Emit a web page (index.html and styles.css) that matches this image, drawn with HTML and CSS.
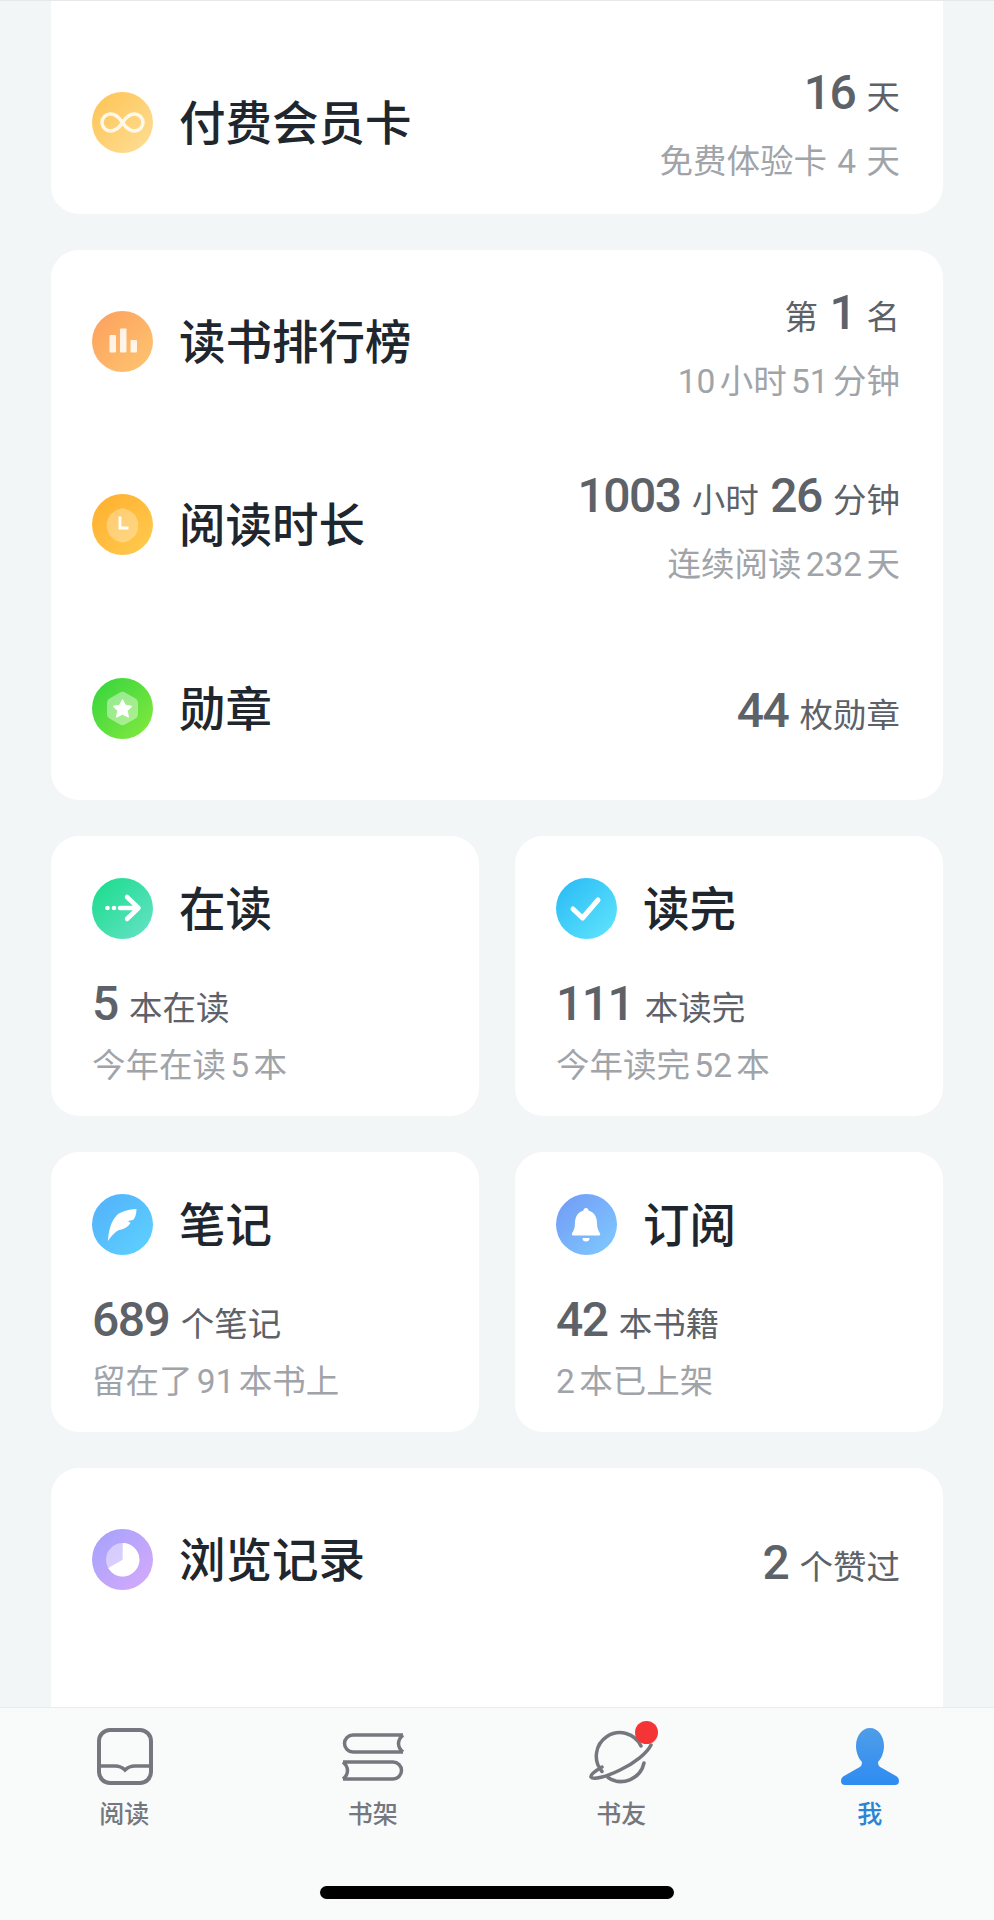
FILE: index.html
```html
<!DOCTYPE html>
<html lang="zh-CN">
  <head>
    <meta charset="UTF-8" />
    <title>我</title>
    <link rel="stylesheet" href="styles.css">
  </head>
  <body>
    <main class="content">
      <!-- Membership -->
      <section class="card card-first">
        <div class="row">
          <svg class="icon" viewBox="0 0 61 61">
            <defs><linearGradient id="g1" x1="0" y1="0" x2="1" y2="1"><stop offset="0" stop-color="#fdc352"/><stop offset="1" stop-color="#ffdf98"/></linearGradient></defs>
            <circle cx="30.5" cy="30.5" r="30.5" fill="url(#g1)"/>
            <path d="M30.500 30.500C27 25 23 22 18.500 22a8.500 8.500 0 0 0 0 17C23 39 27 36 30.500 30.500C34 25 38 22 42.500 22a8.500 8.500 0 0 1 0 17C38 39 34 36 30.500 30.500z" fill="none" stroke="#fff" stroke-opacity=".85" stroke-width="3.500"/>
          </svg>
          <h2 class="title">付费会员卡</h2>
          <div class="stat">
            <div class="stat-main"><b>16</b> 天</div>
            <div class="stat-sub stat-sub-wide">免费体验卡 4 天</div>
          </div>
        </div>
      </section>

      <!-- Ranking, time, medals -->
      <section class="card">
        <div class="row">
          <svg class="icon" viewBox="0 0 61 61">
            <defs><linearGradient id="g2" x1="0" y1="0" x2="1" y2="1"><stop offset="0" stop-color="#fd9f5e"/><stop offset="1" stop-color="#fdc670"/></linearGradient></defs>
            <circle cx="30.500" cy="30.500" r="30.500" fill="url(#g2)"/>
            <g fill="#fff" fill-opacity=".85">
              <rect x="17.500" y="24" width="6.500" height="17.500" rx="1"/>
              <rect x="28" y="17.500" width="6.500" height="24" rx="1"/>
              <rect x="38.500" y="29" width="6.500" height="12.500" rx="1"/>
            </g>
          </svg>
          <h2 class="title">读书排行榜</h2>
          <div class="stat">
            <div class="stat-main">第 <b>1</b> 名</div>
            <div class="stat-sub">10 小时 51 分钟</div>
          </div>
        </div>
        <div class="row">
          <svg class="icon" viewBox="0 0 61 61">
            <defs><linearGradient id="g3" x1="0" y1="0" x2="1" y2="1"><stop offset="0" stop-color="#ffae2e"/><stop offset="1" stop-color="#ffcc50"/></linearGradient></defs>
            <circle cx="30.500" cy="30.500" r="30.500" fill="url(#g3)"/>
            <path d="M30.500 14l7 2.400 5.700 4.700 3 6.800v7l-3 6.800-5.700 4.700-7 2.400-7-2.400-5.700-4.700-3-6.800v-7l3-6.800 5.700-4.700z" fill="#fff" fill-opacity=".3"/>
            <path d="M28 22.500V34h8.500" fill="none" stroke="#fff" stroke-width="2.800"/>
          </svg>
          <h2 class="title">阅读时长</h2>
          <div class="stat">
            <div class="stat-main"><b>1003</b> 小时 <b>26</b> 分钟</div>
            <div class="stat-sub">连续阅读 232 天</div>
          </div>
        </div>
        <div class="row">
          <svg class="icon" viewBox="0 0 61 61">
            <defs><linearGradient id="g4" x1="0" y1="0" x2="1" y2="1"><stop offset="0" stop-color="#33d43f"/><stop offset="1" stop-color="#86ea3e"/></linearGradient></defs>
            <circle cx="30.500" cy="30.500" r="30.500" fill="url(#g4)"/>
            <path d="M28 14.500a5 5 0 0 1 5 0l10.500 6a5 5 0 0 1 2.500 4.300v11.400a5 5 0 0 1-2.500 4.300l-10.500 6a5 5 0 0 1-5 0l-10.500-6a5 5 0 0 1-2.500-4.300V24.800a5 5 0 0 1 2.500-4.300z" fill="#fff" fill-opacity=".42"/>
            <path d="M30.500 21.500l3 5.800 6.400 1-4.600 4.500 1.100 6.400-5.900-3-5.900 3 1.100-6.400-4.600-4.500 6.400-1z" fill="#fff" stroke="#fff" stroke-width="1" stroke-linejoin="round"/>
          </svg>
          <h2 class="title">勋章</h2>
          <div class="stat stat-single">
            <div class="stat-main"><b>44</b> 枚勋章</div>
          </div>
        </div>
      </section>

      <!-- Shelf stats -->
      <div class="grid">
        <section class="card tile">
          <div class="tile-head">
            <svg class="icon" viewBox="0 0 61 61">
              <defs><linearGradient id="g5" x1="0" y1="0" x2="1" y2="1"><stop offset="0" stop-color="#17dc8a"/><stop offset="1" stop-color="#68e2c8"/></linearGradient></defs>
              <circle cx="30.500" cy="30.500" r="30.500" fill="url(#g5)"/>
              <circle cx="15.500" cy="30" r="2.300" fill="#fff"/>
              <circle cx="22" cy="30" r="2.300" fill="#fff"/>
              <path d="M28 30h18M35 19L46.500 30 35 41" fill="none" stroke="#fff" stroke-width="4.500" stroke-linecap="round" stroke-linejoin="round"/>
            </svg>
            <h2 class="title">在读</h2>
          </div>
          <div class="stat-main"><b>5</b> 本在读</div>
          <div class="stat-sub">今年在读 5 本</div>
        </section>
        <section class="card tile">
          <div class="tile-head">
            <svg class="icon" viewBox="0 0 61 61">
              <defs><linearGradient id="g6" x1="0" y1="0" x2="1" y2="1"><stop offset="0" stop-color="#27b9f5"/><stop offset="1" stop-color="#62e6fd"/></linearGradient></defs>
              <circle cx="30.500" cy="30.500" r="30.500" fill="url(#g6)"/>
              <path d="M17 31l9.500 9L42 22" fill="none" stroke="#fff" stroke-width="5" stroke-linecap="round" stroke-linejoin="round"/>
            </svg>
            <h2 class="title">读完</h2>
          </div>
          <div class="stat-main"><b>111</b> 本读完</div>
          <div class="stat-sub">今年读完 52 本</div>
        </section>
        <section class="card tile">
          <div class="tile-head">
            <svg class="icon" viewBox="0 0 61 61">
              <defs><linearGradient id="g7" x1="0" y1="0" x2="1" y2="1"><stop offset="0" stop-color="#52b0fb"/><stop offset="1" stop-color="#5ed2ff"/></linearGradient></defs>
              <circle cx="30.500" cy="30.500" r="30.500" fill="url(#g7)"/>
              <path d="M16 47C16.500 37 19 27 25 21C30 17 37 15.500 44.500 15C44.500 20 43 24 41 26L36 27L38.500 29C36 33 32 35.500 27 36C23 38 19 42 16 47z" fill="#fff"/>
            </svg>
            <h2 class="title">笔记</h2>
          </div>
          <div class="stat-main"><b>689</b> 个笔记</div>
          <div class="stat-sub">留在了 91 本书上</div>
        </section>
        <section class="card tile">
          <div class="tile-head">
            <svg class="icon" viewBox="0 0 61 61">
              <defs><linearGradient id="g8" x1="0" y1="0" x2="1" y2="1"><stop offset="0" stop-color="#7299f5"/><stop offset="1" stop-color="#7fcbff"/></linearGradient></defs>
              <circle cx="30.500" cy="30.500" r="30.500" fill="url(#g8)"/>
              <path d="M30 14c1.500 0 2.500 1 2.500 2.500C38 18 41 23 41 29c0 5 1.500 8 3 10.500c.5 1 0 2-1 2H17c-1 0-1.500-1-1-2c1.500-2.500 3-5.500 3-10.500c0-6 3-11 8.500-12.500C27.500 15 28.500 14 30 14z" fill="#fff"/>
              <path d="M26.500 44h7a3.500 3.500 0 0 1-7 0z" fill="#fff"/>
            </svg>
            <h2 class="title">订阅</h2>
          </div>
          <div class="stat-main"><b>42</b> 本书籍</div>
          <div class="stat-sub">2 本已上架</div>
        </section>
      </div>

      <!-- History -->
      <section class="card card-last">
        <div class="row">
          <svg class="icon" viewBox="0 0 61 61">
            <defs><linearGradient id="g9" x1="0" y1="0" x2="1" y2="1"><stop offset="0" stop-color="#a3a2fb"/><stop offset="1" stop-color="#d7aafb"/></linearGradient></defs>
            <circle cx="30.500" cy="30.500" r="30.500" fill="url(#g9)"/>
            <circle cx="30.700" cy="30.700" r="16.700" fill="#fff" fill-opacity=".45"/>
            <path d="M30.700 30.700V14A16.700 16.700 0 1 1 16.200 39z" fill="#fff"/>
          </svg>
          <h2 class="title">浏览记录</h2>
          <div class="stat stat-single">
            <div class="stat-main"><b>2</b> 个赞过</div>
          </div>
        </div>
      </section>
    </main>

    <!-- Tab bar -->
    <nav class="tabbar">
      <div class="tabs">
        <div class="tab">
          <svg class="tab-icon tab-icon-book" viewBox="0 0 56 57">
            <rect x="2" y="2" width="52" height="53" rx="11" fill="none" stroke="#74787e" stroke-width="4"/>
            <path d="M2 38h16c4 0 7 1 10 4c3-3 6-4 10-4h16" fill="none" stroke="#74787e" stroke-width="3.500"/>
          </svg>
          <span class="tab-label">阅读</span>
        </div>
        <div class="tab">
          <svg class="tab-icon" viewBox="0 -5 62 57">
            <path d="M61 2H11a8.500 8.500 0 0 0 0 17H61M61 2c-3 2.500-4.500 5-4.500 8.500S58 16.500 61 19M1 29h50a8.500 8.500 0 0 1 0 17H1M1 29c3 2.500 4.500 5 4.500 8.500S4 43.500 1 46" fill="none" stroke="#74787e" stroke-width="3.500"/>
          </svg>
          <span class="tab-label">书架</span>
        </div>
        <div class="tab">
          <span class="planet">
            <svg class="tab-icon" viewBox="0 -4 64 57">
              <path d="M52 14A23.500 23.500 0 1 0 13 39.500M19 45.500A23.500 23.500 0 0 0 55 31M13 35C6 39 1 43 2 45C4 48 17 45 31 38C46 31 58 21 62 13" fill="none" stroke="#74787e" stroke-width="3.500" stroke-linecap="round"/>
            </svg>
            <span class="badge"></span>
          </span>
          <span class="tab-label">书友</span>
        </div>
        <div class="tab tab-active">
          <svg class="tab-icon" viewBox="0 0 58 57">
            <defs><linearGradient id="g10" x1="0" y1="0" x2="0" y2="1"><stop offset="0" stop-color="#4f9de9"/><stop offset="1" stop-color="#2e8cf1"/></linearGradient></defs>
            <path d="M29 0C37 0 43 8 43 18C43 25 40 31 37 34C37 37 38 39 41 40L55 48C57 49 58 51 58 53C58 56 56 57 54 57H4C2 57 0 56 0 53C0 51 1 49 3 48L17 40C20 39 21 37 21 34C18 31 15 25 15 18C15 8 21 0 29 0z" fill="url(#g10)"/>
          </svg>
          <span class="tab-label">我</span>
        </div>
      </div>
      <div class="home-bar"></div>
    </nav>
  </body>
</html>
```

FILE: styles.css
```css
* {
  box-sizing: border-box;
}

html,
body {
  margin: 0;
  height: 1920px;
  overflow: hidden;
}

body {
  display: flex;
  flex-direction: column;
  background: #f3f6f7;
  font-family: Roboto, "Noto Sans CJK SC", sans-serif;
}

.content {
  flex: 1;
  min-height: 0;
  overflow: hidden;
  display: flex;
  flex-direction: column;
  gap: 36px;
  padding: 0 51px;
  border-top: 1px solid #e6e8ea;
}

.card {
  background: #fff;
  border-radius: 28px;
  flex-shrink: 0;
}

.card-first {
  height: 213px;
  border-radius: 0 0 28px 28px;
  display: flex;
  align-items: flex-end;
}

.card-first .row {
  width: 100%;
}

.card-last {
  height: 400px;
}

.row {
  display: flex;
  align-items: center;
  height: 183.33px;
  padding: 0 43px 0 41px;
}

.icon {
  width: 61px;
  height: 61px;
  flex-shrink: 0;
}

.title {
  margin: 0 0 0 26px;
  padding-top: 4px;
  font-size: 46.5px;
  font-weight: 500;
  color: #20262e;
  line-height: 57px;
}

.stat {
  margin-left: auto;
  padding-top: 20px;
  text-align: right;
}

.stat-single {
  padding-top: 16px;
}

.stat-main {
  font-size: 33.5px;
  line-height: 60px;
  color: #5d6168;
  word-spacing: 3px;
}

.stat-main b {
  font-size: 48px;
  font-weight: 500;
  line-height: 0;
  letter-spacing: -1.5px;
}

.stat-sub {
  font-size: 33.5px;
  line-height: 68px;
  color: #a0a4a9;
  word-spacing: -4px;
}

.stat-sub-wide {
  word-spacing: 2px;
}

.grid {
  display: grid;
  grid-template-columns: 428px 428px;
  gap: 36px;
}

.tile {
  height: 280px;
  padding: 42px 41px 0;
}

.tile-head {
  display: flex;
  align-items: center;
  margin-bottom: 40px;
}

.tile .stat-sub {
  line-height: 44px;
  margin-top: 5px;
}

.tabbar {
  height: 213px;
  flex-shrink: 0;
  background: #f9fafa;
  border-top: 1px solid #e9ebec;
  display: flex;
  flex-direction: column;
  align-items: center;
}

.tabs {
  display: grid;
  grid-template-columns: repeat(4, 1fr);
  width: 100%;
  padding-top: 20px;
}

.tab {
  display: flex;
  flex-direction: column;
  align-items: center;
}

.tab-icon {
  display: block;
  height: 57px;
}

.tab-icon-book {
  margin-left: 2px;
}

.planet {
  position: relative;
}

.badge {
  position: absolute;
  top: -7px;
  right: -5px;
  width: 23px;
  height: 23px;
  border-radius: 50%;
  background: #f53535;
}

.tab-label {
  margin-top: 12px;
  font-size: 25px;
  font-weight: 500;
  line-height: 36px;
  color: #74787e;
}

.tab-active .tab-label {
  color: #2a85d6;
}

.home-bar {
  width: 354px;
  height: 13px;
  margin-top: 53px;
  border-radius: 7px;
  background: #000;
}
```
